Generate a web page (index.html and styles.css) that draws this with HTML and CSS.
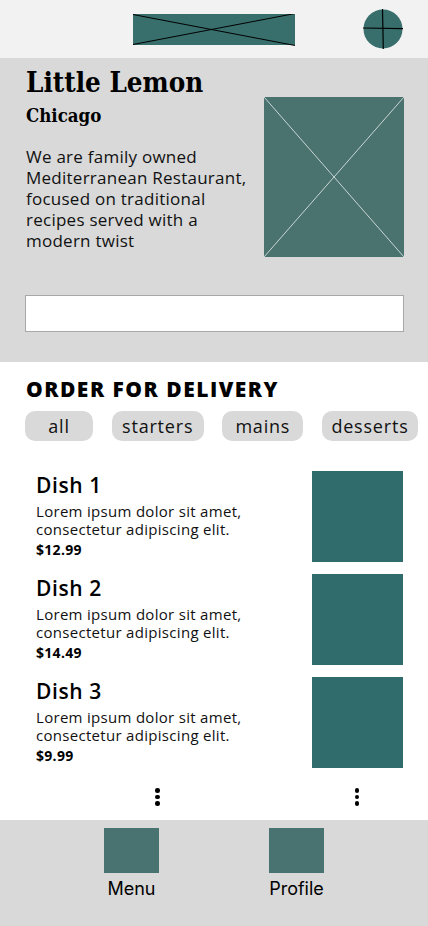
FILE: index.html
```html
<!DOCTYPE html>
<html lang="en">
<head>
<meta charset="utf-8">
<title>Little Lemon</title>
<link rel="stylesheet" href="styles.css">
</head>
<body>
<header class="topbar">
  <div></div>
  <svg class="logo" width="162" height="32" viewBox="0 0 162 32">
    <rect x="0" y="0" width="162" height="31" fill="#386e6b"/>
    <line x1="0" y1="0.5" x2="162" y2="31.5" stroke="#000" stroke-width="1"/>
    <line x1="0" y1="30.5" x2="162" y2="-0.5" stroke="#000" stroke-width="1"/>
  </svg>
  <svg class="avatar" width="40" height="40" viewBox="0 0 40 40">
    <circle cx="20" cy="20" r="19.5" fill="#386e6b"/>
    <line x1="19.5" y1="0" x2="20.3" y2="40" stroke="#000" stroke-width="1.2"/>
    <line x1="0" y1="19" x2="40" y2="19.6" stroke="#000" stroke-width="1.2"/>
  </svg>
</header>

<section class="hero">
  <div class="hero-row">
    <div class="hero-text">
      <h1 class="title">Little Lemon</h1>
      <h2 class="city">Chicago</h2>
      <p class="intro">We are family owned Mediterranean Restaurant, focused on traditional recipes served with a modern twist</p>
    </div>
    <svg class="hero-img" width="140" height="160" viewBox="0 0 140 160">
      <rect width="140" height="160" fill="#4a7370"/>
      <line x1="0" y1="0" x2="140" y2="160" stroke="#c9d6d4" stroke-width="1"/>
      <line x1="140" y1="0" x2="0" y2="160" stroke="#c9d6d4" stroke-width="1"/>
    </svg>
  </div>
  <div class="search"></div>
</section>

<section class="order">
  <h3 class="order-title">ORDER FOR DELIVERY</h3>
  <div class="pills">
    <span class="pill">all</span>
    <span class="pill">starters</span>
    <span class="pill">mains</span>
    <span class="pill">desserts</span>
  </div>
</section>

<ul class="dishes">
  <li class="dish">
    <div class="dish-text">
      <h4 class="dish-name">Dish 1</h4>
      <p class="dish-desc">Lorem ipsum dolor sit amet, consectetur adipiscing elit.</p>
      <p class="dish-price">$12.99</p>
    </div>
    <div class="dish-img"></div>
  </li>
  <li class="dish">
    <div class="dish-text">
      <h4 class="dish-name">Dish 2</h4>
      <p class="dish-desc">Lorem ipsum dolor sit amet, consectetur adipiscing elit.</p>
      <p class="dish-price">$14.49</p>
    </div>
    <div class="dish-img"></div>
  </li>
  <li class="dish">
    <div class="dish-text">
      <h4 class="dish-name">Dish 3</h4>
      <p class="dish-desc">Lorem ipsum dolor sit amet, consectetur adipiscing elit.</p>
      <p class="dish-price">$9.99</p>
    </div>
    <div class="dish-img"></div>
  </li>
</ul>

<div class="more">
  <span class="kebab"><i></i><i></i><i></i></span>
  <span class="kebab"><i></i><i></i><i></i></span>
</div>

<nav class="tabbar">
  <div class="tab">
    <div class="tab-icon"></div>
    <span class="tab-label">Menu</span>
  </div>
  <div class="tab">
    <div class="tab-icon"></div>
    <span class="tab-label">Profile</span>
  </div>
</nav>
</body>
</html>
```

FILE: styles.css
```css
* { box-sizing: border-box; }
html, body { margin: 0; padding: 0; }
body {
  width: 428px;
  height: 926px;
  overflow: hidden;
  background: #ffffff;
  color: #000;
  font-family: "Open Sans", "Noto Sans", sans-serif;
}
h1, h2, h3, h4, p, ul { margin: 0; padding: 0; }
ul { list-style: none; }

.topbar {
  height: 58px;
  background: #f2f2f2;
  display: grid;
  grid-template-columns: 1fr auto 1fr;
  align-items: start;
}
.logo { display: block; margin-top: 14px; }
.avatar { display: block; justify-self: end; margin-top: 9px; margin-right: 25px; }

.hero {
  background: #d9d9d9;
  height: 304px;
  padding: 8px 24px 0 26px;
}
.hero-row {
  display: flex;
  justify-content: space-between;
}
.hero-text { width: 228px; }
.title {
  font-family: "DejaVu Serif Condensed", "DejaVu Serif", serif;
  font-weight: bold;
  font-size: 27.5px;
  line-height: 33px;
}
.city {
  font-family: "DejaVu Serif Condensed", "DejaVu Serif", serif;
  font-weight: bold;
  font-size: 18.5px;
  line-height: 24px;
  margin-top: 5px;
}
.intro {
  font-size: 17px;
  line-height: 21px;
  letter-spacing: 0.25px;
  margin-top: 18px;
  color: #111;
}
.hero-img { display: block; margin-top: 31px; flex: none; }
.search {
  margin-top: 38px;
  width: 379px;
  height: 37px;
  margin-left: -1px;
  background: #fff;
  border: 1px solid #a8a8a8;
}

.order { padding: 13px 10px 0 25px; }
.order-title {
  font-weight: 800;
  font-size: 21px;
  line-height: 28px;
  letter-spacing: 1.5px;
  margin-left: 1px;
}
.pills {
  margin-top: 8px;
  display: grid;
  grid-template-columns: 68px 92px 81px 96px;
  justify-content: space-between;
}
.pill {
  height: 30px;
  background: #d9d9d9;
  border-radius: 10px;
  font-size: 18px;
  line-height: 30px;
  letter-spacing: 0.8px;
  text-align: center;
  color: #111;
}

.dishes {
  margin-top: 30px;
  padding: 0 25px 0 36px;
  display: flex;
  flex-direction: column;
  gap: 12px;
}
.dish {
  display: flex;
  justify-content: space-between;
  height: 91px;
}
.dish-text { width: 240px; }
.dish-name {
  font-size: 21px;
  font-weight: 600;
  line-height: 28px;
  letter-spacing: 0.6px;
}
.dish-desc {
  font-size: 15px;
  line-height: 18px;
  letter-spacing: 0.3px;
  margin-top: 3px;
  color: #111;
}
.dish-price {
  font-size: 14px;
  font-weight: 700;
  line-height: 18px;
  letter-spacing: 0.3px;
  margin-top: 3px;
}
.dish-img {
  width: 91px;
  height: 91px;
  background: #306c6b;
  flex: none;
}

.more {
  height: 52px;
  display: flex;
  align-items: center;
  padding: 6px 0 0 155px;
  gap: 195px;
}
.kebab {
  display: flex;
  flex-direction: column;
  gap: 2px;
}
.kebab i {
  display: block;
  width: 4.5px;
  height: 4.5px;
  border-radius: 50%;
  background: #000;
}

.tabbar {
  height: 106px;
  background: #d9d9d9;
  display: flex;
  padding: 8px 0 0 104px;
  gap: 110px;
}
.tab {
  width: 55px;
  display: flex;
  flex-direction: column;
  align-items: center;
}
.tab-icon {
  width: 55px;
  height: 45px;
  background: #497371;
}
.tab-label {
  font-family: "Inter", sans-serif;
  font-size: 18px;
  line-height: 22px;
  margin-top: 5px;
  white-space: nowrap;
}
```
